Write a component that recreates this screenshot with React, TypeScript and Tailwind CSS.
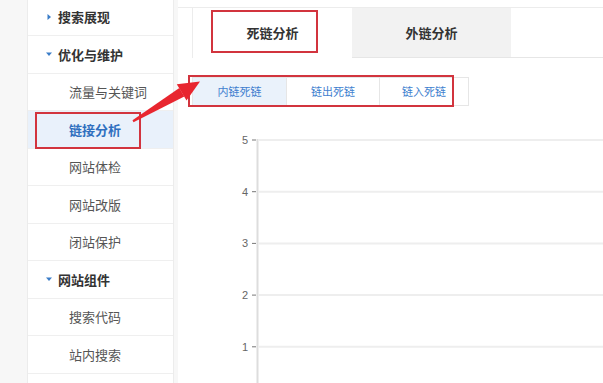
import React from "react";

type NavItem = { label: string; kind: "group" | "item"; open?: boolean; active?: boolean };

const nav: NavItem[] = [
  { label: "搜索展现", kind: "group", open: false },
  { label: "优化与维护", kind: "group", open: true },
  { label: "流量与关键词", kind: "item" },
  { label: "链接分析", kind: "item", active: true },
  { label: "网站体检", kind: "item" },
  { label: "网站改版", kind: "item" },
  { label: "闭站保护", kind: "item" },
  { label: "网站组件", kind: "group", open: true },
  { label: "搜索代码", kind: "item" },
  { label: "站内搜索", kind: "item" },
  { label: "", kind: "item" },
];

const ticks = [5, 4, 3, 2, 1];

function Caret({ open }: { open?: boolean }) {
  return (
    <svg width="8" height="8" viewBox="0 0 8 8" className="mr-[5px]">
      {open ? (
        <polygon points="1,2.5 7,2.5 4,6" fill="#3b7dc8" />
      ) : (
        <polygon points="2.5,1 6,4 2.5,7" fill="#3b7dc8" />
      )}
    </svg>
  );
}

export default function App() {
  return (
    <div
      className="relative flex h-[383px] w-[603px] overflow-hidden bg-[#f7f7f7]"
      style={{ fontFamily: '"Noto Sans CJK SC", "Noto Sans", sans-serif' }}
    >
      {/* Sidebar */}
      <aside className="ml-[27px] mt-[-1.5px] w-[147px] shrink-0 border-x border-[#ececec] bg-white">
        {nav.map((n, i) => (
          <div
            key={i}
            className={
              "relative flex h-[37.5px] items-center border-b border-[#efefef] text-[13px] " +
              (n.kind === "group"
                ? "pl-[17px] font-bold text-[#333]"
                : n.active
                ? "bg-[#e9f1fb] pl-[41px] font-bold text-[#2f6fbf]"
                : "pl-[41px] text-[#555]")
            }
          >
            {n.kind === "group" && <Caret open={n.open} />}
            {n.label}
            {n.active && (
              <div className="absolute left-[7px] top-[1px] h-[37px] w-[106px] border-2 border-[#d2343e]" />
            )}
          </div>
        ))}
      </aside>

      {/* Main */}
      <main className="ml-[4px] flex-1 bg-white">
        <div className="mt-[7px] flex h-[51px] border-t border-[#ececec] pl-[14px]">
          <div className="relative flex w-[160px] items-center justify-center border-l border-[#ececec] bg-white text-[13px] font-bold text-[#333]">
            死链分析
            <div className="absolute left-[18px] top-[2px] h-[43px] w-[107px] border-2 border-[#d2343e]" />
          </div>
          <div className="flex w-[159px] items-center justify-center border-b border-[#e6e6e6] bg-[#f2f2f2] text-[13px] font-bold text-[#333]">
            外链分析
          </div>
          <div className="flex-1 border-b border-[#e6e6e6]" />
        </div>

        <div className="relative ml-[14px] mt-[19px] flex h-[29px] w-fit border border-[#e6e6e6] text-[11px] text-[#3f7fcf]">
          <div className="flex w-[93px] items-center justify-center bg-[#eaf2fb]">内链死链</div>
          <div className="flex w-[93px] items-center justify-center border-l border-[#e6e6e6]">链出死链</div>
          <div className="flex w-[89px] items-center justify-center border-l border-[#e6e6e6]">链入死链</div>
          <div className="absolute left-[-5px] top-[-3px] h-[32px] w-[266px] border-2 border-[#d2343e]" />
        </div>

        <svg width="425" height="277" className="mt-[8px] block">
          {ticks.map((t, i) => {
            const y = 26 + i * 51.7;
            return (
              <g key={t}>
                <text
                  x="70"
                  y={y + 4}
                  textAnchor="end"
                  fontSize="11"
                  fill="#666"
                  fontFamily="Liberation Sans, sans-serif"
                >
                  {t}
                </text>
                <line x1="74" x2="78" y1={y} y2={y} stroke="#777" strokeWidth="1" />
                <line x1="81" x2="425" y1={y} y2={y} stroke="#eeeeee" strokeWidth="2" />
              </g>
            );
          })}
          <line x1="79.5" x2="79.5" y1="25" y2="277" stroke="#dddddd" strokeWidth="2" />
        </svg>
      </main>

      {/* Callout arrow */}
      <svg className="pointer-events-none absolute left-0 top-0" width="603" height="383">
        <polygon points="132.5,120.3 133.5,122.2 184.3,96.4 179.3,88.0" fill="#e8262f" />
        <polygon points="200,81.5 186.5,100.5 176.8,84.3" fill="#e8262f" />
      </svg>
    </div>
  );
}
